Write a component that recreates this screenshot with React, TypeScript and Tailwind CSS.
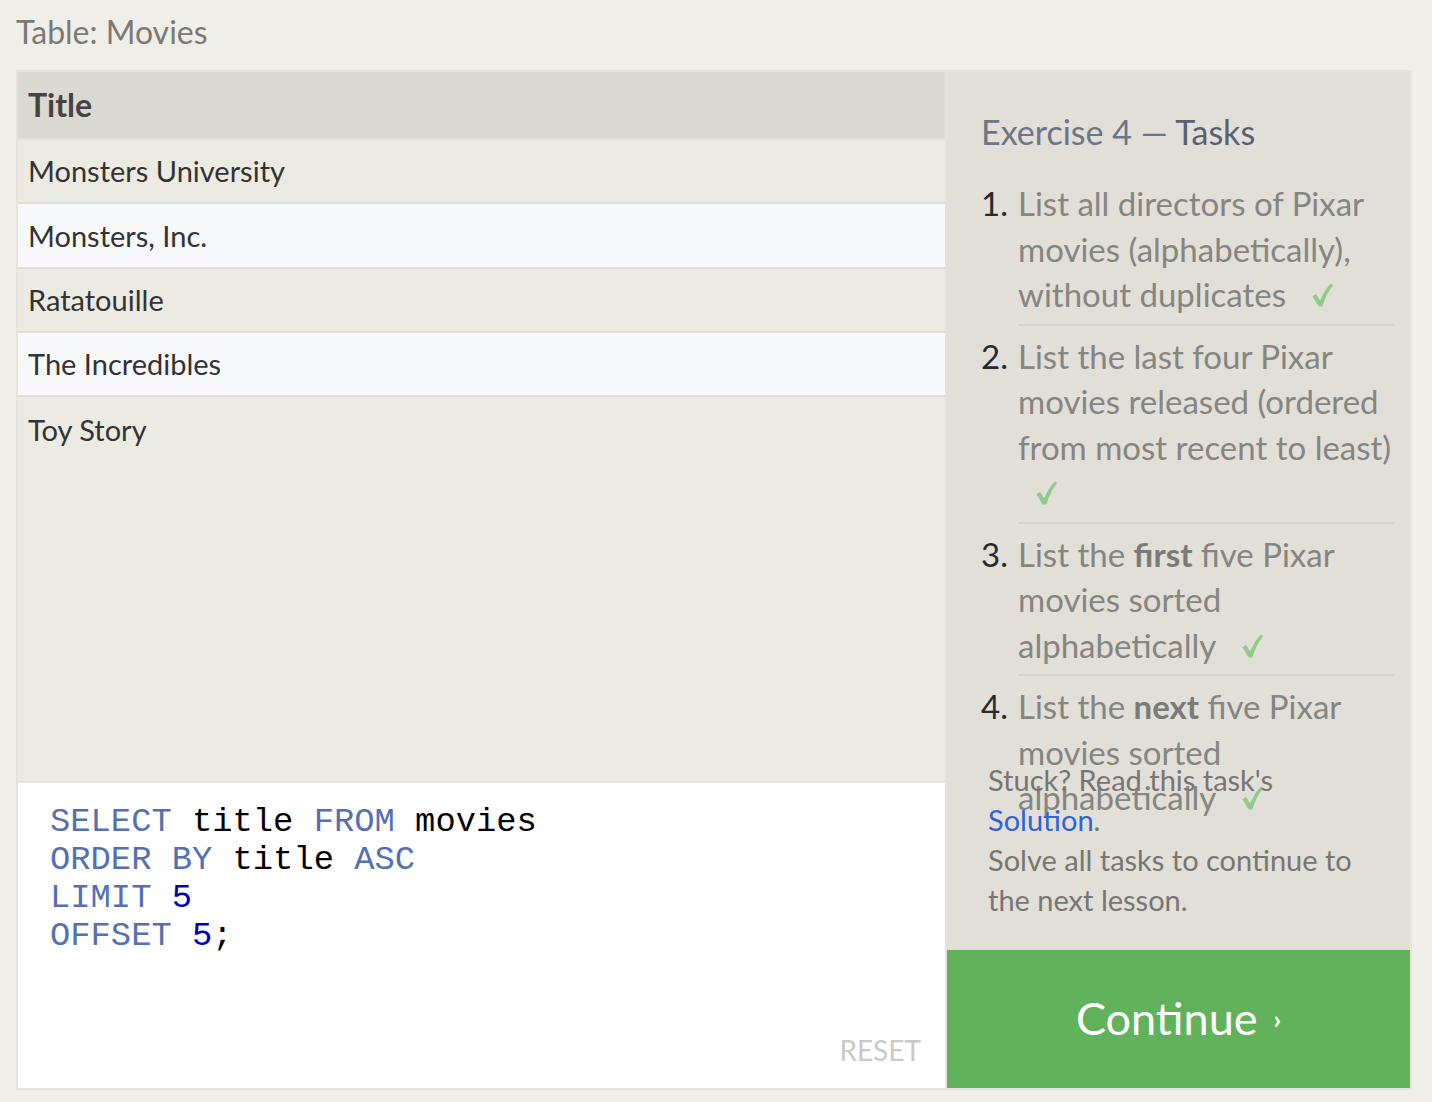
import React from "react";

const font = { fontFamily: "Lato, 'Noto Sans', sans-serif" };

function Check() {
  return (
    <svg
      className="inline-block ml-[18px] align-baseline"
      width="21"
      height="24"
      viewBox="0 0 21 24"
    >
      <path
        d="M0.5 13.2 L4 11 L8.2 17.6 Q12.5 7 19.2 0.3 L21 2.2 Q14.2 10.5 10.2 23.6 L6.6 23.6 Z"
        fill="#8dcb86"
      />
    </svg>
  );
}

export default function App() {
  const rows = ["Monsters University", "Monsters, Inc.", "Ratatouille", "The Incredibles", "Toy Story"];
  return (
    <div className="w-[1432px] h-[1102px] bg-[#f0eee8] overflow-hidden" style={font}>
      <div className="pl-[16px] pt-[12px] h-[70px] text-[32px] leading-[40px] text-[#7b7a76]">Table: Movies</div>
      <div className="ml-[16px] w-[1396px] h-[1020px] border-2 border-[#e5e3dc] bg-[#e5e3dc] flex gap-[2px]">
        {/* Left */}
        <div className="w-[927px] flex flex-col">
          <div className="flex-1 bg-[#ebeae3] flex flex-col">
            <div className="h-[68px] bg-[#dbdad2] border-b-2 border-[#e3e2dc] pl-[10px] flex items-center text-[32px] font-bold text-[#444]">
              Title
            </div>
            {rows.map((r, i) => (
              <div
                key={r}
                className={
                  "h-[64.3px] pl-[10px] flex items-center text-[29px] text-[#333] " +
                  (i % 2 === 1 ? "bg-[#f7f8f9] " : "bg-[#ebeae3] ") +
                  (i === rows.length - 1 ? "" : "border-b-2 border-[#dfded8]")
                }
              >
                {r}
              </div>
            ))}
          </div>
          <div className="h-[307px] bg-white border-t-2 border-[#e6e5de] relative">
            <pre
              className="pl-[32px] pt-[20px] text-[33.8px] leading-[38px] text-black"
              style={{ fontFamily: "'Liberation Mono', 'Courier New', monospace" }}
            >
              <span className="text-[#5470b3]">SELECT</span> title <span className="text-[#5470b3]">FROM</span> movies{"\n"}
              <span className="text-[#5470b3]">ORDER BY</span> title <span className="text-[#5470b3]">ASC</span>{"\n"}
              <span className="text-[#5470b3]">LIMIT</span> <span className="text-[#0000c4]">5</span>{"\n"}
              <span className="text-[#5470b3]">OFFSET</span> <span className="text-[#0000c4]">5</span>;
            </pre>
            <div className="absolute right-[24px] bottom-[17px] text-[28px] text-[#c9c9c9]">RESET</div>
          </div>
        </div>
        {/* Right */}
        <div className="w-[463px] bg-[#e1dfd8] flex flex-col">
          <div className="h-[688px] pl-[34px] pr-[16px] pt-[38px]">
            <div className="text-[34px] leading-[44px] text-[#6d7587]">
              Exercise 4 — <span className="text-[#586074]">Tasks</span>
            </div>
            <ol className="mt-[27px] text-[33px] leading-[45.5px] text-[#858581]">
              <li className="flex">
                <span className="w-[37px] shrink-0 text-[#2a2a2a]">1.</span>
                <div className="flex-1 pb-[6px] border-b-2 border-[#d6d4cc]">
                  List all directors of Pixar movies (alphabetically), without duplicates <Check />
                </div>
              </li>
              <li className="flex pt-[8px]">
                <span className="w-[37px] shrink-0 text-[#2a2a2a]">2.</span>
                <div className="flex-1 pb-[6px] border-b-2 border-[#d6d4cc]">
                  List the last four Pixar movies released (ordered from most recent to least) <Check />
                </div>
              </li>
              <li className="flex pt-[8px]">
                <span className="w-[37px] shrink-0 text-[#2a2a2a]">3.</span>
                <div className="flex-1 pb-[6px] border-b-2 border-[#d6d4cc]">
                  List the <b className="text-[#7a7a76]">first</b> five Pixar movies sorted alphabetically <Check />
                </div>
              </li>
              <li className="flex pt-[8px]">
                <span className="w-[37px] shrink-0 text-[#2a2a2a]">4.</span>
                <div className="flex-1 pb-[6px]">
                  List the <b className="text-[#7a7a76]">next</b> five Pixar movies sorted alphabetically <Check />
                </div>
              </li>
            </ol>
          </div>
          <div className="pl-[41px] pr-[40px] text-[29px] leading-[40px] text-[#777673]">
            <p>
              Stuck? Read this task's <span className="text-[#2f63d6]">Solution</span>.
            </p>
            <p>Solve all tasks to continue to the next lesson.</p>
          </div>
          <div className="flex-1" />
          <div className="h-[138px] bg-[#61b35b] flex items-center justify-center text-white">
            <span className="text-[45px]">Continue</span>
            <span className="ml-[16px] text-[26px] font-bold">›</span>
          </div>
        </div>
      </div>
    </div>
  );
}
